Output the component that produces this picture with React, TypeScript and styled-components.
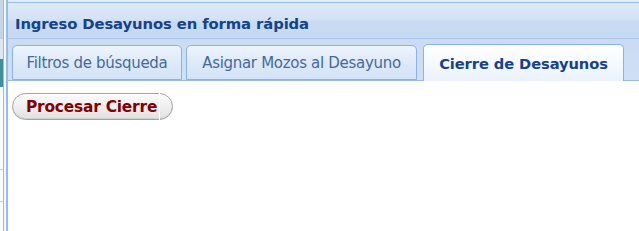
import React from "react";
import styled, { createGlobalStyle } from "styled-components";

const Global = createGlobalStyle`
  html, body { margin: 0; padding: 0; background: #ffffff; }
  body { width: 639px; height: 231px; overflow: hidden; font-family: "DejaVu Sans", Tahoma, sans-serif; }
  #root { height: 231px; }
`;

const Page = styled.div`
  display: flex;
  height: 231px;
  width: 639px;
  overflow: hidden;
`;

const BackGrid = styled.div`
  width: 3px;
  display: flex;
  flex-direction: column;
  background: #fafcff;
  border-right: 1px solid #a9b8cc;
`;

const BackCell = styled.div<{ $h: number; $bg: string; $line?: boolean }>`
  height: ${(p) => p.$h}px;
  flex-shrink: 0;
  background: ${(p) => p.$bg};
  border-bottom: ${(p) => (p.$line ? "1px solid #c8d0da" : "none")};
`;

const Gutter = styled.div`
  width: 2px;
  background: #f4f8fd;
`;

const Panel = styled.div`
  flex: 1;
  display: flex;
  flex-direction: column;
  border-left: 2px solid #99bbe8;
  min-width: 0;
`;

const TopEdge = styled.div`
  height: 2px;
  background: #e3ecf8;
  border-bottom: 1px solid #99bbe8;
`;

const Header = styled.div`
  height: 35px;
  display: flex;
  align-items: center;
  padding-left: 7px;
  padding-top: 6px;
  box-sizing: border-box;
  background: linear-gradient(to bottom, #dfe9f6 0%, #d3e2f5 45%, #c8dbf3 55%, #c6d9f2 100%);
  font-family: "DejaVu Sans", Tahoma, sans-serif;
  font-weight: bold;
  font-size: 14.8px;
  color: #15428b;
  letter-spacing: -0.1px;
`;

const TabStrip = styled.div`
  height: 43px;
  display: flex;
  align-items: flex-end;
  gap: 4px;
  padding-left: 4px;
  background: linear-gradient(to bottom, #c9dcf3 0%, #cfe0f6 100%);
  border-top: 1px solid #a8c3e6;
  border-bottom: 1px solid #99bbe8;
  box-sizing: border-box;
`;

const Tab = styled.div<{ $active?: boolean; $w: number }>`
  width: ${(p) => p.$w}px;
  height: ${(p) => (p.$active ? 37 : 35)}px;
  margin-left: ${(p) => (p.$active ? 2 : 0)}px;
  margin-bottom: ${(p) => (p.$active ? -1 : 0)}px;
  box-sizing: border-box;
  display: flex;
  align-items: center;
  justify-content: center;
  border: 1px solid #8db2e3;
  border-bottom: ${(p) => (p.$active ? "none" : "1px solid #8db2e3")};
  border-radius: 5px 5px 0 0;
  background: ${(p) =>
    p.$active
      ? "linear-gradient(to bottom, #ffffff 0%, #f3f8ff 60%, #eaf2fd 100%)"
      : "linear-gradient(to bottom, #edf4fd 0%, #dce8f8 60%, #d3e3f7 100%)"};
  font-family: "DejaVu Sans", Tahoma, sans-serif;
  font-size: ${(p) => (p.$active ? 14.7 : 15)}px;
  font-weight: ${(p) => (p.$active ? "bold" : "normal")};
  color: ${(p) => (p.$active ? "#15428b" : "#45699c")};
  letter-spacing: ${(p) => (p.$active ? "-0.1px" : "-0.3px")};
  white-space: nowrap;
  padding-top: 1px;
`;

const Body = styled.div`
  flex: 1;
  background: #ffffff;
  padding: 12px 0 0 4px;
`;

const PillButton = styled.button`
  position: relative;
  width: 161px;
  height: 27px;
  border: 1px solid #a3a3a3;
  border-radius: 14px;
  background: linear-gradient(to bottom, #fbfbfb 0%, #f0f0f0 45%, #e2e2e2 100%);
  box-shadow: inset 0 -1px 0 #d0d0d0, inset 0 1px 0 #ffffff;
  font-family: "DejaVu Sans", Tahoma, sans-serif;
  font-weight: bold;
  font-size: 15.4px;
  color: #840000;
  letter-spacing: -0.2px;
  padding: 0 0 0 13px;
  text-align: left;
  display: flex;
  align-items: center;
  cursor: pointer;
  white-space: nowrap;
`;

const Seam = styled.span`
  position: absolute;
  left: 146px;
  top: -1px;
  width: 1px;
  height: 27px;
  background: #ffffff;
`;

export default function App() {
  return (
    <>
      <Global />
      <Page>
        <BackGrid>
          <BackCell $h={38} $bg="#c7d5e8" $line />
          <BackCell $h={20} $bg="#dde7f3" />
          <BackCell $h={28} $bg="#3f8f9c" />
          <BackCell $h={82} $bg="#fafcff" $line />
          <BackCell $h={31} $bg="#fafcff" $line />
          <BackCell $h={40} $bg="#fafcff" />
        </BackGrid>
        <Gutter />
        <Panel>
          <TopEdge />
          <Header>Ingreso Desayunos en forma rápida</Header>
          <TabStrip>
            <Tab $w={170}>Filtros de búsqueda</Tab>
            <Tab $w={231}>Asignar Mozos al Desayuno</Tab>
            <Tab $w={201} $active>
              Cierre de Desayunos
            </Tab>
          </TabStrip>
          <Body>
            <PillButton>
              Procesar Cierre
              <Seam />
            </PillButton>
          </Body>
        </Panel>
      </Page>
    </>
  );
}
